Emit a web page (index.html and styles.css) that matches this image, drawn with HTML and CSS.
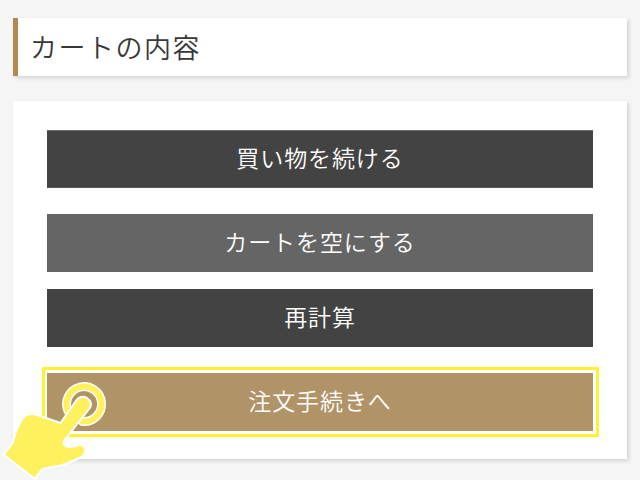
FILE: index.html
```html
<!DOCTYPE html>
<html lang="ja">
<head>
<meta charset="utf-8">
<title>カートの内容</title>
<link rel="stylesheet" href="styles.css">
</head>
<body>
<main class="page">
  <h1 class="heading">カートの内容</h1>
  <section class="panel">
    <button class="btn btn-continue">買い物を続ける</button>
    <button class="btn btn-empty">カートを空にする</button>
    <button class="btn btn-recalc">再計算</button>
    <div class="target">
      <button class="btn btn-order">注文手続きへ</button>
      <span class="frame"></span>
    </div>
  </section>
  <svg class="hand" width="130" height="120" viewBox="0 0 130 120" aria-hidden="true">
    <path class="ring-edge" d="M68 51A17.500 17.500 0 1 1 82.500 61.500"/>
    <path class="ring" d="M68 51A17.500 17.500 0 1 1 82.500 61.500"/>
    <path class="hand-shape" d="M3.500 94.500L12.500 83.500C15 75 17 65 23.500 57.500C27 53.500 31 53.500 36 54.500L60.500 63L75.500 41.500C78.500 36.500 83 35.500 87 38C91.500 41 92 45 89.500 48.500L65 79.500C62 83 64.500 86.500 69 87C73 87.500 77 84.800 80.500 85C84.500 85.500 86 89 85 92.500C84.300 95.500 82 96.800 79.500 98C72 101.500 66 104 60.500 105.500C54 107 47 107 42 109.500L34.500 118.800Z"/>
  </svg>
</main>
</body>
</html>
```

FILE: styles.css
```css
* {
  box-sizing: border-box;
}

body {
  margin: 0;
  background: #f5f5f5;
  color: #383838;
  font-family: "Noto Sans CJK JP", sans-serif;
  font-weight: 350;
}

.page {
  position: relative;
  height: 480px;
  padding: 18px 13px 0 13px;
  overflow: hidden;
}

.heading {
  width: 614px;
  height: 58px;
  margin: 0 0 25px;
  padding-left: 12px;
  border-left: 5px solid #b18a50;
  background: #fff;
  box-shadow: 2px 2px 4px rgba(0, 0, 0, 0.14);
  font-size: 27px;
  font-weight: 350;
  line-height: 57px;
  letter-spacing: 1.5px;
}

.panel {
  display: flex;
  flex-direction: column;
  width: 614px;
  height: 358px;
  padding: 29px 34px 0 34px;
  background: #fff;
  box-shadow: 2px 2px 4px rgba(0, 0, 0, 0.14);
}

.btn {
  display: block;
  width: 100%;
  height: 58px;
  padding: 0 0 4px;
  border: 0;
  background: #434343;
  color: #fff;
  font: inherit;
  font-size: 23px;
  line-height: 54px;
  letter-spacing: 0.9px;
  text-align: center;
}

.btn-continue {
  margin-bottom: 26px;
  border-top: 1px solid #6c716e;
  border-bottom: 1px solid #555;
  line-height: 52px;
}

.btn-empty {
  margin-bottom: 17px;
  background: #656565;
}

.btn-recalc {
  margin-bottom: 26px;
}

.target {
  position: relative;
}

.btn-order {
  background: #b09367;
}

.frame {
  position: absolute;
  inset: -6px -6px -6px -5px;
  border: 3px solid #fff034;
  border-radius: 1px;
}

.hand {
  position: absolute;
  left: 0;
  top: 360px;
}

.ring,
.ring-edge {
  fill: none;
  stroke: #fff05e;
  stroke-width: 6;
  stroke-linecap: round;
}

.ring-edge {
  stroke: #fff;
  stroke-width: 9;
}

.hand-shape {
  fill: #fff05e;
  stroke: #fff;
  stroke-width: 2;
  stroke-linejoin: round;
}
```
